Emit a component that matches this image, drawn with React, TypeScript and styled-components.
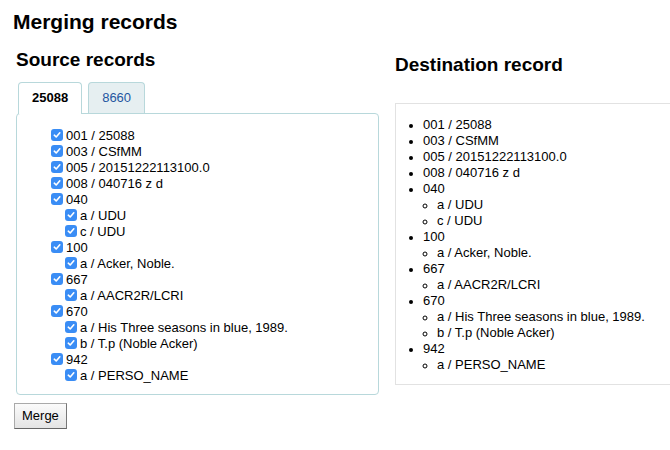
import React from "react";
import styled, { createGlobalStyle } from "styled-components";

const GlobalStyle = createGlobalStyle`
  *, *::before, *::after { box-sizing: border-box; }
  html, body { margin: 0; padding: 0; overflow: hidden; background: #fff; }
  body {
    font-family: "Liberation Sans", Arial, Helvetica, sans-serif;
    font-size: 13px;
    line-height: 16px;
    color: #000;
  }
`;

const Page = styled.div`
  padding: 10px 0 0 13px;
  width: 670px;
`;

const Title = styled.h1`
  margin: 0;
  font-size: 21px;
  line-height: 24px;
  font-weight: bold;
`;

const Columns = styled.div`
  display: flex;
  align-items: flex-start;
  gap: 17px;
  margin-left: 1px;
`;

const LeftCol = styled.div`
  width: 364px;
  flex: none;
  display: flex;
  flex-direction: column;
  align-items: flex-start;
`;

const RightCol = styled.div`
  flex: 1;
  min-width: 0;
  display: flex;
  flex-direction: column;
  margin-right: -4px;
`;

const Heading = styled.h2<{ $top: number; $bottom: number; $indent?: number }>`
  margin: ${(p) => p.$top}px 0 ${(p) => p.$bottom}px ${(p) => p.$indent ?? 0}px;
  font-size: 19px;
  line-height: 22px;
  font-weight: bold;
`;

const TabList = styled.div`
  display: flex;
  align-items: flex-start;
  gap: 6px;
  margin-left: 4px;
  height: 31px;
`;

const Tab = styled.div<{ $active?: boolean }>`
  position: relative;
  z-index: 1;
  border: 1px solid #b8d8db;
  border-bottom: none;
  border-radius: 4px 4px 0 0;
  padding: 7px 13px ${(p) => (p.$active ? 8 : 7)}px;
  background: ${(p) => (p.$active ? "#fff" : "#e6eff1")};
  color: ${(p) => (p.$active ? "#000" : "#1f56a0")};
  font-weight: ${(p) => (p.$active ? "bold" : "normal")};
  cursor: pointer;
`;

const Panel = styled.div`
  margin-left: 2px;
  width: 363px;
  border: 1px solid #b8d8db;
  border-radius: 4px;
  padding: 14px 0 10px 34px;
`;

const CheckList = styled.ul<{ $nested?: boolean }>`
  list-style: none;
  margin: 0;
  padding: 0 0 0 ${(p) => (p.$nested ? 14 : 0)}px;
`;

const CheckRow = styled.div`
  display: flex;
  align-items: flex-start;
  height: 16px;
  white-space: pre;
`;

const Box = styled.span`
  width: 12px;
  height: 12px;
  margin: 1px 3px 0 0;
  border-radius: 3px;
  background: #3a8df5;
  display: inline-flex;
  align-items: center;
  justify-content: center;
  flex: none;
`;

const MergeButton = styled.button`
  margin-top: 8px;
  font-family: "Liberation Sans", Arial, sans-serif;
  font-size: 13px;
  line-height: 16px;
  color: #000;
  padding: 4px 7px;
  border: 1px solid #aaa;
  border-right-color: #777;
  border-bottom-color: #666;
  border-radius: 0;
  background: linear-gradient(#fbfbfb, #e4e4e4);
`;

const DestBox = styled.div`
  border: 1px solid #e2e2e2;
  padding: 13px 0 11px 0;
`;

const BulletList = styled.ul<{ $nested?: boolean }>`
  margin: 0;
  padding-left: ${(p) => (p.$nested ? 14 : 27)}px;
  list-style: ${(p) => (p.$nested ? "circle" : "disc")};
  white-space: pre;
  & > li::marker {
    font-size: 12px;
  }
`;

type Field = { tag: string; value?: string; subs?: [string, string][] };

const fields: Field[] = [
  { tag: "001", value: "25088" },
  { tag: "003", value: "CSfMM" },
  { tag: "005", value: "20151222113100.0" },
  { tag: "008", value: "040716 z d" },
  { tag: "040", subs: [["a", "UDU"], ["c", "UDU"]] },
  { tag: "100", subs: [["a", "Acker, Noble."]] },
  { tag: "667", subs: [["a", "AACR2R/LCRI"]] },
  {
    tag: "670",
    subs: [
      ["a", "His Three seasons in blue, 1989."],
      ["b", "T.p (Noble Acker)"],
    ],
  },
  { tag: "942", subs: [["a", "PERSO_NAME"]] },
];

const Check = () => (
  <Box>
    <svg width="8" height="8" viewBox="0 0 8 8">
      <path d="M1.3 4.2 L3.2 6 L6.8 1.8" fill="none" stroke="#fff" strokeWidth="1.6" strokeLinecap="round" strokeLinejoin="round" />
    </svg>
  </Box>
);

const label = (f: Field) => (f.value ? `${f.tag} / ${f.value}` : f.tag);

export default function App() {
  return (
    <>
      <GlobalStyle />
      <Page>
        <Title>Merging records</Title>
        <Columns>
          <LeftCol>
            <Heading $top={15} $bottom={11} $indent={2}>
              Source records
            </Heading>
            <TabList>
              <Tab $active>25088</Tab>
              <Tab>8660</Tab>
            </TabList>
            <Panel>
              <CheckList>
                {fields.map((f) => (
                  <li key={f.tag}>
                    <CheckRow>
                      <Check />
                      {label(f)}
                    </CheckRow>
                    {f.subs && (
                      <CheckList $nested>
                        {f.subs.map(([c, v]) => (
                          <li key={c}>
                            <CheckRow>
                              <Check />
                              {`${c} / ${v}`}
                            </CheckRow>
                          </li>
                        ))}
                      </CheckList>
                    )}
                  </li>
                ))}
              </CheckList>
            </Panel>
            <MergeButton>Merge</MergeButton>
          </LeftCol>
          <RightCol>
            <Heading $top={20} $bottom={27}>
              Destination record
            </Heading>
            <DestBox>
              <BulletList>
                {fields.map((f) => (
                  <li key={f.tag}>
                    {label(f)}
                    {f.subs && (
                      <BulletList $nested>
                        {f.subs.map(([c, v]) => (
                          <li key={c}>{`${c} / ${v}`}</li>
                        ))}
                      </BulletList>
                    )}
                  </li>
                ))}
              </BulletList>
            </DestBox>
          </RightCol>
        </Columns>
      </Page>
    </>
  );
}
